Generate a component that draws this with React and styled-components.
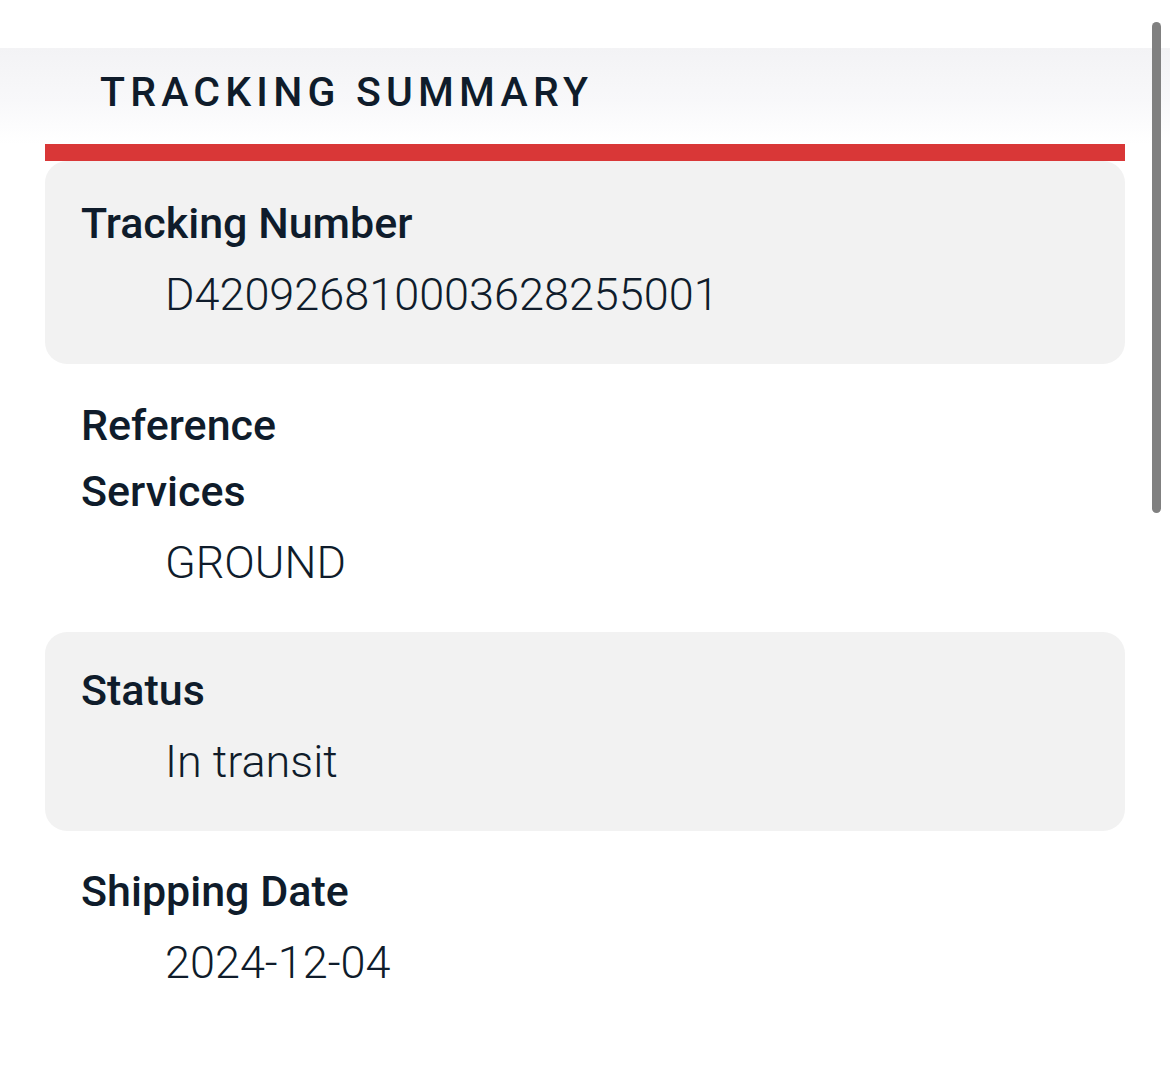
import React from "react";
import styled, { createGlobalStyle } from "styled-components";

const Global = createGlobalStyle`
  html, body { margin: 0; padding: 0; background: #ffffff; overflow: hidden; }
  body { font-family: Roboto, "Noto Sans", "Liberation Sans", sans-serif; color: #0f1c2b; }
  * { box-sizing: border-box; }
`;

const Page = styled.div`
  padding-top: 48px;
  min-height: 1300px;
`;

const Header = styled.header`
  height: 96px;
  background: linear-gradient(180deg, #f3f3f5 0%, #f8f8fa 55%, #ffffff 100%);
  padding: 18px 0 0 100px;
`;

const Title = styled.h1`
  margin: 0;
  font-size: 41px;
  line-height: 52px;
  font-weight: 500;
  letter-spacing: 5.2px;
  color: #0f1c2b;
`;

const Summary = styled.div`
  margin: 0 45px;
  border-top: 17px solid #d93737;
`;

const Section = styled.section`
  background: ${(p) => (p.$shaded ? "#f2f2f2" : "transparent")};
  border-radius: 22px;
  padding: ${(p) => p.$pt || 28}px 36px 36px 36px;
`;

const Label = styled.div`
  font-size: 43px;
  line-height: 66px;
  font-weight: 500;
  color: #0f1c2b;
`;

const Value = styled.div`
  font-size: 45px;
  line-height: 66px;
  font-weight: 300;
  color: #0f1c2b;
  margin: 6px 0 0 84px;
`;

const ScrollThumb = styled.div`
  position: fixed;
  top: 22px;
  left: 1152px;
  width: 9px;
  height: 491px;
  border-radius: 5px;
  background: #808080;
`;

const sections = [
  { shaded: true, pt: 29, fields: [{ label: "Tracking Number", value: "D420926810003628255001" }] },
  { shaded: false, pt: 28, fields: [{ label: "Reference" }, { label: "Services", value: "GROUND" }] },
  { shaded: true, pt: 25, fields: [{ label: "Status", value: "In transit" }] },
  { shaded: false, pt: 27, fields: [{ label: "Shipping Date", value: "2024-12-04" }] },
];

export default function App() {
  return (
    <>
      <Global />
      <Page>
        <Header>
          <Title>TRACKING SUMMARY</Title>
        </Header>
        <Summary>
          {sections.map((s, i) => (
            <Section key={i} $shaded={s.shaded} $pt={s.pt}>
              {s.fields.map((f) => (
                <React.Fragment key={f.label}>
                  <Label>{f.label}</Label>
                  {f.value && <Value>{f.value}</Value>}
                </React.Fragment>
              ))}
            </Section>
          ))}
        </Summary>
      </Page>
      <ScrollThumb />
    </>
  );
}
